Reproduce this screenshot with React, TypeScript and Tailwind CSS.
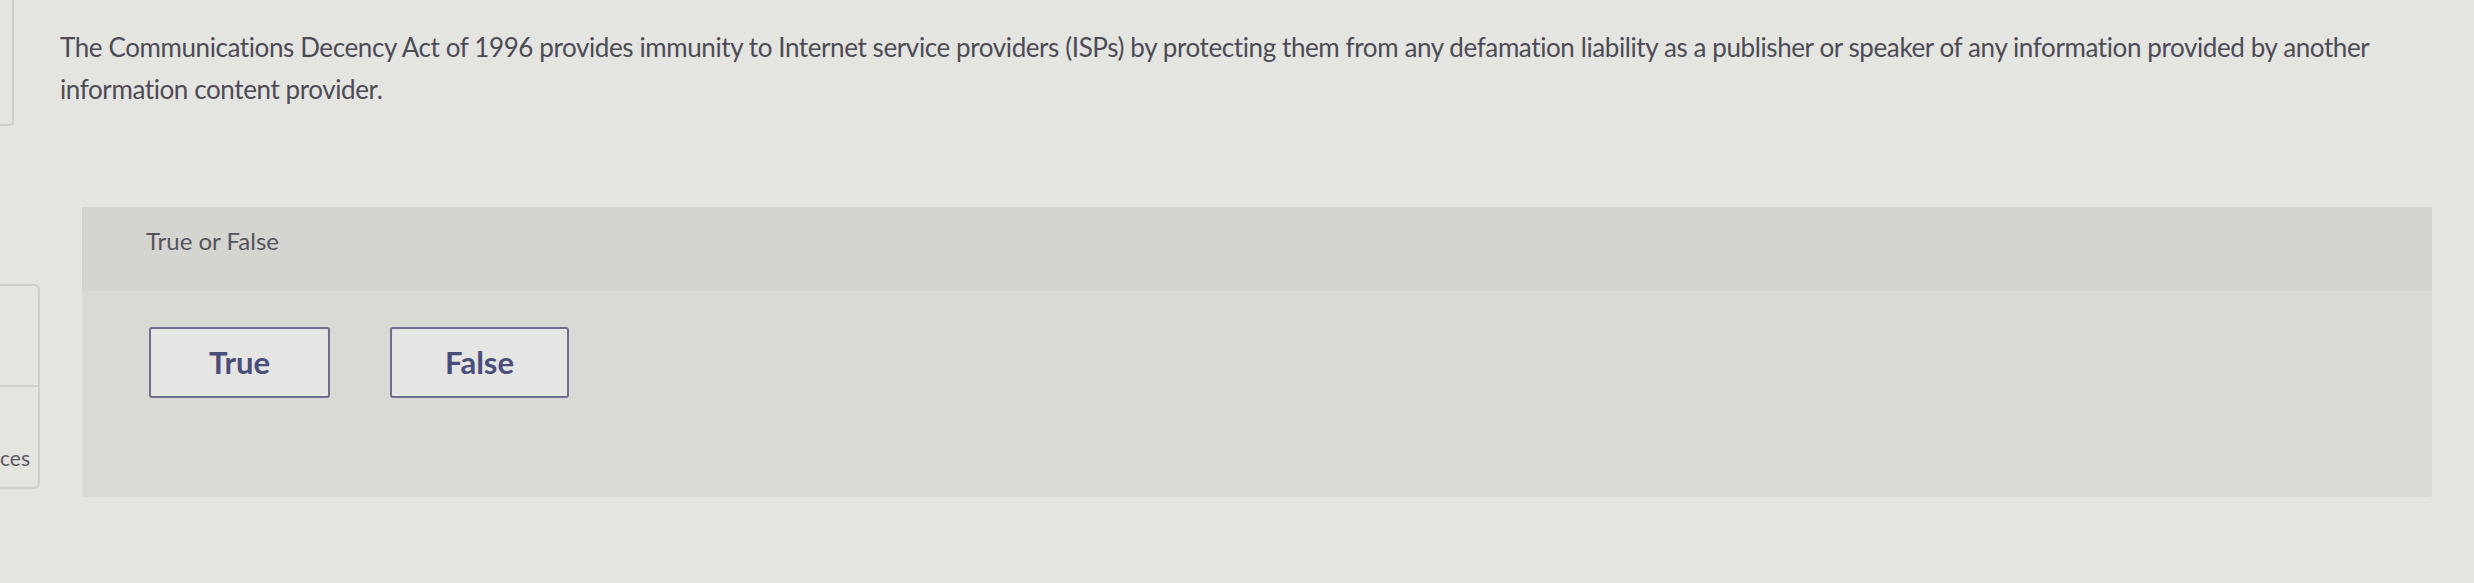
import React from "react";

export default function App() {
  return (
    <div
      className="w-[2474px] h-[583px] overflow-hidden bg-[#e4e4e1] flex"
      style={{ fontFamily: "Lato, 'Open Sans', sans-serif" }}
    >
      {/* left sidebar, clipped */}
      <div className="w-[40px] shrink-0 flex flex-col">
        <div className="h-[126px] w-[14px] border-r-2 border-b-2 border-[#cfcfcc] rounded-br-[4px]" />
        <div className="mt-[158px] h-[205px] w-[44px] -ml-[4px] border-2 border-l-0 border-[#cfcfcc] rounded-r-[6px] flex flex-col">
          <div className="h-[101px] border-b-2 border-[#cfcfcc]" />
          <div className="flex-1 flex items-end justify-end pr-[8px] pb-[19px] overflow-hidden">
            <span className="text-[21px] leading-none text-[#5b5a62] whitespace-nowrap">ces</span>
          </div>
        </div>
      </div>

      {/* main content */}
      <div className="flex-1 flex flex-col">
        <p className="pl-[20px] pt-[26px] text-[26px] leading-[42px] tracking-[-0.4px] text-[#4d4b55] whitespace-nowrap">
          The Communications Decency Act of 1996 provides immunity to Internet service providers (ISPs) by protecting them from any defamation liability as a publisher or speaker of any information provided by another
          <br />
          information content provider.
        </p>

        <div className="mt-[97px] ml-[42px] w-[2350px] h-[290px] bg-[#d9d9d6] rounded-[3px] flex flex-col">
          <div className="h-[84px] bg-[#d4d4d1] flex items-start pt-[20px] pl-[64px]">
            <span className="text-[24px] leading-[28px] text-[#55545c]">True or False</span>
          </div>
          <div className="flex gap-[60px] pl-[67px] pt-[36px]">
            <button className="w-[181px] h-[71px] bg-[#e5e5e3] border-2 border-[#6b6e8c] rounded-[3px] text-[31px] font-bold text-[#4a4e7a]">
              True
            </button>
            <button className="w-[179px] h-[71px] bg-[#e5e5e3] border-2 border-[#6b6e8c] rounded-[3px] text-[31px] font-bold text-[#4a4e7a]">
              False
            </button>
          </div>
        </div>
      </div>
    </div>
  );
}
